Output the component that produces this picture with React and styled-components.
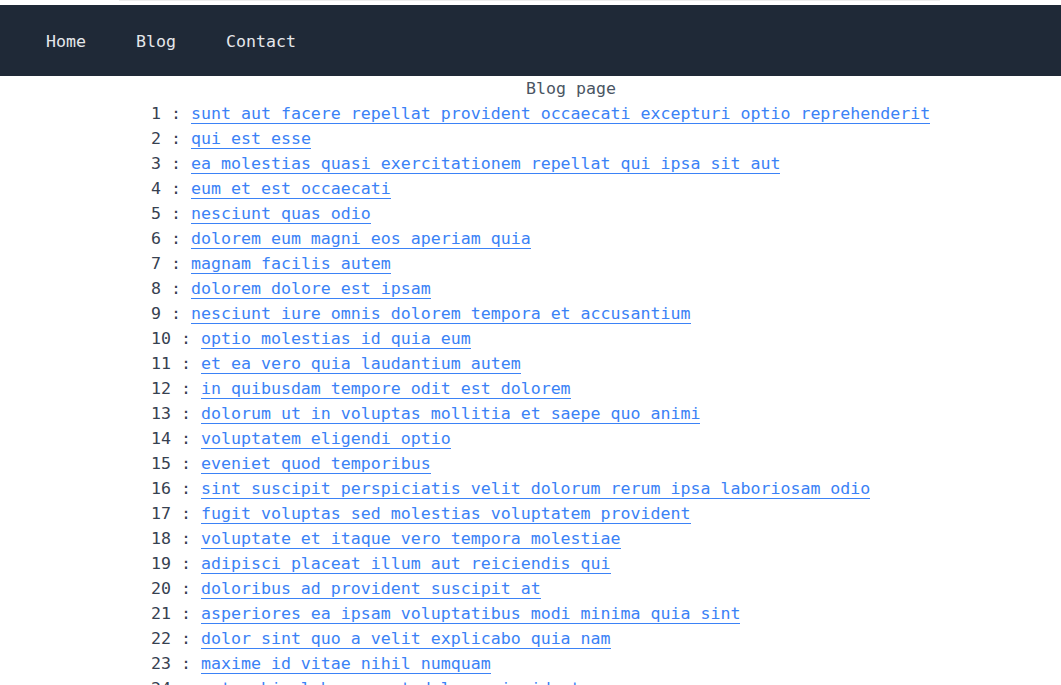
import React from 'react';
import styled, { createGlobalStyle } from 'styled-components';

const GlobalStyle = createGlobalStyle`
  body {
    margin: 0;
    background: #fff;
    font-family: "DejaVu Sans Mono", "Liberation Mono", monospace;
  }
`;

const TopStrip = styled.div`
  height: 5px;
  padding-left: 119px;
`;

const TopBar = styled.div`
  width: 821px;
  height: 1px;
  background-color: #ececec;
`;

const Navbar = styled.nav`
  display: flex;
  align-items: center;
  gap: 50px;
  height: 70px;
  padding-left: 46px;
  background-color: #1f2937;
  border-top: 1px solid #1f2937;
`;

const NavLink = styled.a`
  color: #e5e7eb;
  font-size: 16.6px;
  text-decoration: none;
  cursor: pointer;
`;

const Main = styled.main`
  width: 840px;
  margin-left: 151px;
  font-size: 16.6px;
  line-height: 25px;
  color: #374151;
`;

const Title = styled.div`
  text-align: center;
  color: #4b5563;
`;

const List = styled.div`
  display: flex;
  flex-direction: column;
`;

const Row = styled.div`
  white-space: pre;
`;

const PostLink = styled.a`
  color: #3b82f6;
  text-decoration: none;
  border-bottom: 1px solid #3b82f6;
  cursor: pointer;
`;

const posts = [
  'sunt aut facere repellat provident occaecati excepturi optio reprehenderit',
  'qui est esse',
  'ea molestias quasi exercitationem repellat qui ipsa sit aut',
  'eum et est occaecati',
  'nesciunt quas odio',
  'dolorem eum magni eos aperiam quia',
  'magnam facilis autem',
  'dolorem dolore est ipsam',
  'nesciunt iure omnis dolorem tempora et accusantium',
  'optio molestias id quia eum',
  'et ea vero quia laudantium autem',
  'in quibusdam tempore odit est dolorem',
  'dolorum ut in voluptas mollitia et saepe quo animi',
  'voluptatem eligendi optio',
  'eveniet quod temporibus',
  'sint suscipit perspiciatis velit dolorum rerum ipsa laboriosam odio',
  'fugit voluptas sed molestias voluptatem provident',
  'voluptate et itaque vero tempora molestiae',
  'adipisci placeat illum aut reiciendis qui',
  'doloribus ad provident suscipit at',
  'asperiores ea ipsam voluptatibus modi minima quia sint',
  'dolor sint quo a velit explicabo quia nam',
  'maxime id vitae nihil numquam',
  'autem hic labore sunt dolores incidunt',
  'rem alias distinctio quo quis',
  'est et quae odit qui non',
  'quasi id et eos tenetur aut quo autem',
  'delectus ullam et corporis nulla voluptas sequi',
  'iusto eius quod necessitatibus culpa ea',
  'a quo magni similique perferendis',
];

const App = () => {
  return (
    <>
      <GlobalStyle />
      <TopStrip>
        <TopBar />
      </TopStrip>
      <Navbar>
        <NavLink>Home</NavLink>
        <NavLink>Blog</NavLink>
        <NavLink>Contact</NavLink>
      </Navbar>
      <Main>
        <Title>Blog page</Title>
        <List>
          {posts.map((title, i) => (
            <Row key={i}>
              {i + 1} : <PostLink>{title}</PostLink>
            </Row>
          ))}
        </List>
      </Main>
    </>
  );
};

export default App;
